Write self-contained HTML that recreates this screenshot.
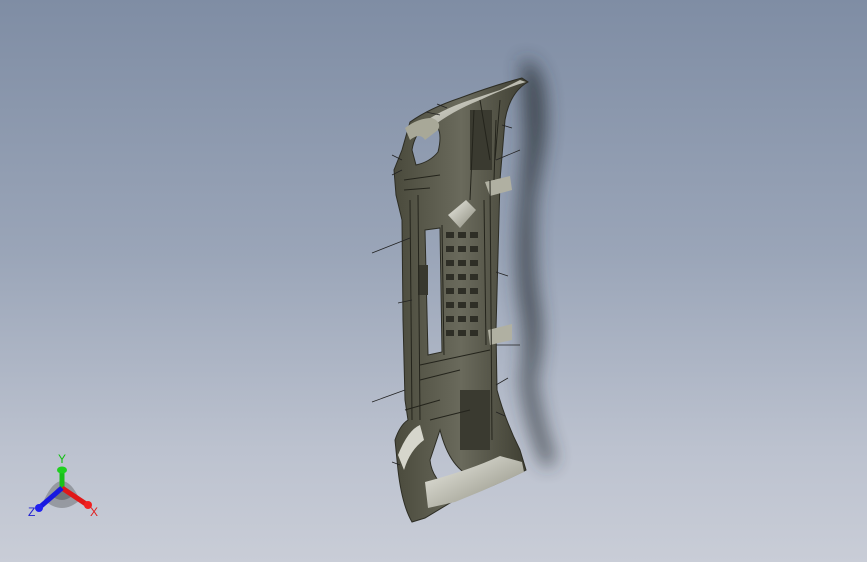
<!DOCTYPE html>
<html><head><style>
html,body{margin:0;padding:0}
body{width:867px;height:562px;overflow:hidden;background:linear-gradient(180deg,#7f8da4 0%,#9aa5b8 45%,#bcc2cf 80%,#c9cdd7 100%);font-family:"Liberation Sans",sans-serif}
svg{position:absolute;left:0;top:0}
</style></head><body>
<svg width="867" height="562" viewBox="0 0 867 562">
<defs>
<filter id="b" x="-100%" y="-20%" width="300%" height="140%"><feGaussianBlur stdDeviation="9"/></filter>
<linearGradient id="m" x1="0" x2="1"><stop offset="0" stop-color="#4a4a3c"/><stop offset=".5" stop-color="#6a6a5c"/><stop offset="1" stop-color="#3e3e32"/></linearGradient>
<linearGradient id="w" x1="0" x2="1" y1="0" y2="1"><stop offset="0" stop-color="#ececE4"/><stop offset="1" stop-color="#8a8a7c"/></linearGradient>
</defs>
<!-- shadow -->
<path d="M522 60 Q550 60 545 140 L535 200 Q532 260 538 300 Q545 340 535 380 Q540 420 555 460 L545 468 Q525 420 522 380 Q528 340 520 300 Q515 250 520 200 L525 140 Z" fill="#2c3038" opacity=".8" filter="url(#b)"/>
<!-- frame -->
<path fill-rule="evenodd" fill="url(#m)" stroke="#2d2d24" stroke-width="1" d="
M402 150 L410 122 Q430 108 460 98 Q495 85 522 78 L528 82 Q510 92 505 120 L500 180 L496 330 L497 390 Q505 420 520 450 L526 470 Q490 488 455 500 L425 518 L412 522 Q402 505 398 470 L395 440 Q400 425 408 420 L405 400 L403 320 L402 220 L396 195 L394 170 Z
M425 230 L440 228 L442 352 L428 355 Z
M412 150 Q415 130 432 122 Q444 128 438 152 Q430 162 416 165 Z
M440 430 Q450 470 475 478 L452 492 Q432 480 430 460 Z"/>
<!-- ladder cells -->
<g fill="#2e2e26">
<rect x="446" y="232" width="8" height="6"/><rect x="458" y="232" width="8" height="6"/><rect x="470" y="232" width="8" height="6"/>
<rect x="446" y="246" width="8" height="6"/><rect x="458" y="246" width="8" height="6"/><rect x="470" y="246" width="8" height="6"/>
<rect x="446" y="260" width="8" height="6"/><rect x="458" y="260" width="8" height="6"/><rect x="470" y="260" width="8" height="6"/>
<rect x="446" y="274" width="8" height="6"/><rect x="458" y="274" width="8" height="6"/><rect x="470" y="274" width="8" height="6"/>
<rect x="446" y="288" width="8" height="6"/><rect x="458" y="288" width="8" height="6"/><rect x="470" y="288" width="8" height="6"/>
<rect x="446" y="302" width="8" height="6"/><rect x="458" y="302" width="8" height="6"/><rect x="470" y="302" width="8" height="6"/>
<rect x="446" y="316" width="8" height="6"/><rect x="458" y="316" width="8" height="6"/><rect x="470" y="316" width="8" height="6"/>
<rect x="446" y="330" width="8" height="6"/><rect x="458" y="330" width="8" height="6"/><rect x="470" y="330" width="8" height="6"/>
<rect x="418" y="265" width="10" height="30" fill="#38382e"/>
<rect x="470" y="110" width="22" height="60" fill="#3a3a30"/>
<rect x="460" y="390" width="30" height="60" fill="#3a3a30"/>
</g>
<!-- highlights -->
<path d="M420 125 Q440 110 470 100 L500 90 L520 80 L526 82 Q505 88 480 100 Q450 112 428 130 Z" fill="url(#w)"/>
<path d="M405 128 Q418 118 432 118 Q442 122 438 130 L425 140 Q420 132 410 140 Z" fill="#a8a898"/>
<path d="M448 215 L466 200 L476 210 L460 228 Z" fill="url(#w)"/>
<path d="M425 482 Q470 470 500 456 L522 462 L524 472 Q490 488 455 502 L428 508 Z" fill="url(#w)"/>
<path d="M398 455 Q408 430 420 425 L424 440 Q410 450 404 470 Z" fill="#d6d6cc"/>
<path d="M488 330 L512 324 L512 340 L490 345 Z" fill="#b0b0a2"/>
<path d="M485 182 L510 176 L512 190 L490 196 Z" fill="#b0b0a2"/>
<!-- detail lines -->
<g stroke="#24241c" stroke-width="1" fill="none">
<path d="M442 225 L444 355 M484 200 L486 345 M410 200 L412 420 M418 195 L420 420 M490 180 L492 440 M496 120 L494 180 M474 110 L470 200"/>
<path d="M404 180 L440 175 M404 190 L430 188 M420 365 L490 350 M420 380 L460 370 M405 410 L440 400 M430 420 L470 410 M480 100 L490 160 M500 100 L495 160"/>
</g>
<!-- leader lines -->
<g stroke="#222" stroke-width=".8">
<path d="M372 253 L410 238 M372 402 L405 390 M496 160 L520 150 M496 272 L508 276 M496 345 L520 345 M496 385 L508 378 M392 155 L402 160 M392 175 L402 170 M392 462 L400 465 M437 104 L447 108 M426 112 L440 115 M398 303 L412 300 M496 412 L505 416 M502 125 L512 128"/>
</g>
<!-- triad -->
<g>
<path d="M44 500 Q62 462 80 500 Q62 516 44 500 Z" fill="#444" opacity=".35"/>
<path d="M52 496 Q62 476 72 496 Q62 504 52 496 Z" fill="#333" opacity=".35"/>
<line x1="62" y1="488" x2="62" y2="472" stroke="#19c019" stroke-width="5"/>
<ellipse cx="62" cy="470" rx="5" ry="3.5" fill="#1fd01f"/>
<line x1="62" y1="488" x2="86" y2="504" stroke="#e01818" stroke-width="5"/>
<circle cx="88" cy="505" r="4" fill="#f02020"/>
<line x1="62" y1="488" x2="40" y2="507" stroke="#1818e0" stroke-width="5"/>
<circle cx="39" cy="508" r="4" fill="#2020f0"/>
<text x="58" y="463" font-size="12" fill="#10c010">Y</text>
<text x="90" y="516" font-size="12" fill="#e02020">X</text>
<text x="28" y="516" font-size="12" fill="#2020d0">Z</text>
</g>
</svg>
</body></html>
